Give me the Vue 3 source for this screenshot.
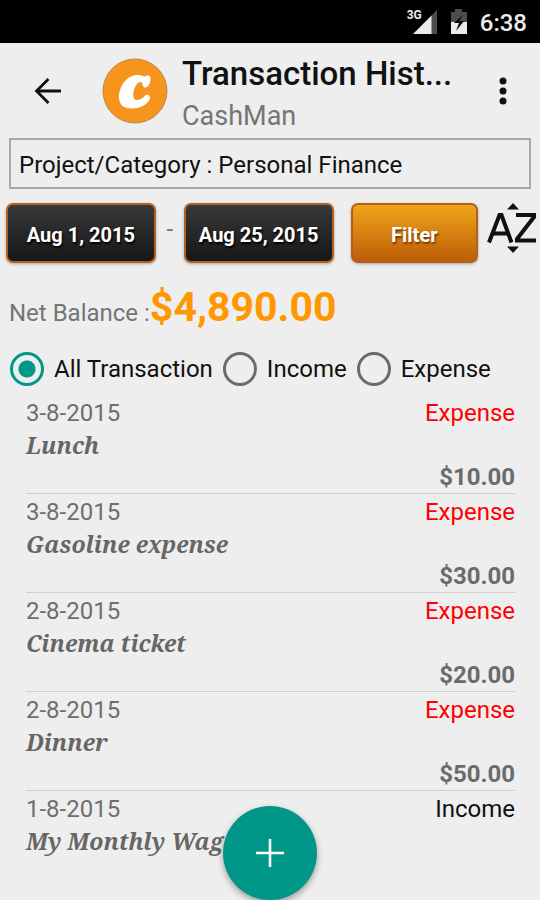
<script setup>
import { ref, computed } from 'vue'

const filter = ref('All Transaction')
const filters = ['All Transaction', 'Income', 'Expense']

const transactions = [
  { date: '3-8-2015', name: 'Lunch', type: 'Expense', amount: '$10.00' },
  { date: '3-8-2015', name: 'Gasoline expense', type: 'Expense', amount: '$30.00' },
  { date: '2-8-2015', name: 'Cinema ticket', type: 'Expense', amount: '$20.00' },
  { date: '2-8-2015', name: 'Dinner', type: 'Expense', amount: '$50.00' },
  { date: '1-8-2015', name: 'My Monthly Wage', type: 'Income', amount: '' },
]

const visible = computed(() =>
  filter.value === 'All Transaction'
    ? transactions
    : transactions.filter((t) => t.type === filter.value),
)
</script>

<template>
  <div class="screen">
    <div class="status">
      <span class="network">3G</span>
      <svg class="signal" width="24" height="24" viewBox="0 0 24 24" aria-hidden="true">
        <path d="M24 0V24H18V6Z" fill="#4c4c4c" />
        <path d="M18.500 5.500V24H0Z" fill="#ececec" />
      </svg>
      <svg class="battery" width="18" height="26" viewBox="0 0 18 26" aria-hidden="true">
        <path d="M5 0H12V3H17V13H1V3H5Z" fill="#4c4c4c" />
        <path d="M1 13H17V25H1Z" fill="#ececec" />
        <path d="M13 6L4 14H9L6 22L14 12H9Z" fill="#000" />
      </svg>
      <span class="clock">6:38</span>
    </div>

    <header class="appbar">
      <button class="icon-btn" aria-label="Back">
        <svg width="28" height="28" viewBox="0 0 28 28" fill="none" stroke="#111" stroke-width="2.800" aria-hidden="true">
          <path d="M27 14H3M14.500 2L2.500 14L14.500 26" />
        </svg>
      </button>
      <svg class="logo" width="66" height="66" viewBox="0 0 66 66" aria-hidden="true">
        <circle cx="33" cy="33" r="32" fill="#f7941d" stroke="#b98a4c" stroke-width="1" />
        <path
          d="M46 17.500C44 17 43 18.500 42 18.500C39 17 34 16.500 30 18C22 21 16.500 31 17 40C17.500 47 22 50.500 29 50.500C38 50.500 44 47 47.500 42C49.500 38.500 46 35 43 37.500C40 41 37.500 42 35 42C31 42 30.500 37 32 32C33.500 27 36 23.500 39 24C41 24.500 40 29 43 29.500C47 29.800 48.500 24 48.500 20C48.500 18.500 47.500 17.500 46 17.500Z"
          fill="#fff"
        />
      </svg>
      <div class="titles">
        <h1>Transaction Hist...</h1>
        <p>CashMan</p>
      </div>
      <button class="icon-btn" aria-label="More">
        <svg width="8" height="28" viewBox="0 0 8 28" fill="#111" aria-hidden="true">
          <circle cx="4" cy="4" r="3.500" />
          <circle cx="4" cy="14" r="3.500" />
          <circle cx="4" cy="24" r="3.500" />
        </svg>
      </button>
    </header>

    <main>
      <button class="project">Project/Category : Personal Finance</button>

      <div class="range">
        <button class="date">Aug 1, 2015</button>
        <span class="dash">-</span>
        <button class="date">Aug 25, 2015</button>
        <button class="apply">Filter</button>
        <button class="icon-btn sort" aria-label="Sort">
          <svg width="50" height="50" viewBox="0 0 50 50" aria-hidden="true">
            <path d="M20 6.500L26 0L32 6.500ZM20 43.500L26 50L32 43.500Z" fill="#111" />
            <g fill="none" stroke="#111" stroke-width="4">
              <path d="M2 39.500L12.500 12H14.500L24.500 39.500M6 30.500H21" />
              <path d="M29 12H47V14L30 36V37.500H49" />
            </g>
          </svg>
        </button>
      </div>

      <p class="balance">Net Balance :<strong>$4,890.00</strong></p>

      <div class="radios" role="radiogroup">
        <label v-for="f in filters" :key="f">
          <input v-model="filter" type="radio" name="type" :value="f" />
          {{ f }}
        </label>
      </div>

      <ul class="list">
        <li v-for="(t, i) in visible" :key="i">
          <div class="line">
            <span>{{ t.date }}</span>
            <span :class="t.type.toLowerCase()">{{ t.type }}</span>
          </div>
          <div class="name">{{ t.name }}</div>
          <div v-if="t.amount" class="amount">{{ t.amount }}</div>
        </li>
      </ul>
    </main>

    <button class="fab" aria-label="Add">
      <svg width="28" height="28" viewBox="0 0 28 28" stroke="#fff" stroke-width="2.600" aria-hidden="true">
        <path d="M14 0V28M0 14H28" />
      </svg>
    </button>
  </div>
</template>

<style>
body {
  background: #eeeeee;
}
</style>

<style scoped>
.screen {
  min-height: 100vh;
  box-sizing: border-box;
  background: #eeeeee;
  color: #111;
  font-family: Roboto, sans-serif;
  font-size: 24px;
  line-height: 32px;
}
h1,
p,
ul {
  margin: 0;
  padding: 0;
}
button {
  font-family: inherit;
  cursor: pointer;
}
.icon-btn {
  display: flex;
  padding: 0;
  border: 0;
  background: none;
}
.status {
  display: flex;
  align-items: center;
  justify-content: flex-end;
  height: 43px;
  padding-right: 13px;
  background: #000;
  color: #ececec;
}
.network {
  align-self: flex-start;
  margin: 7px -9px 0 0;
  font-size: 12px;
  font-weight: 700;
  line-height: 16px;
}
.battery {
  margin: 0 12px 0 13px;
}
.clock {
  padding-top: 2px;
  font-weight: 500;
}
.appbar {
  display: flex;
  align-items: center;
  height: 95px;
  padding: 0 33px 0 34px;
}
.logo {
  flex: none;
  margin: 0 14px 0 40px;
}
.titles {
  flex: 1;
  min-width: 0;
  padding-top: 6px;
}
h1 {
  overflow: hidden;
  font-size: 33px;
  font-weight: 500;
  line-height: 44px;
  white-space: nowrap;
}
.titles p {
  color: #757575;
  font-size: 27px;
  line-height: 40px;
}
.project {
  display: block;
  width: calc(100% - 18px);
  height: 51px;
  margin: 0 9px;
  padding: 2px 8px 0;
  border: 2px solid #a9a9a9;
  background: #eeeeee;
  color: #111;
  font-size: 24px;
  text-align: left;
}
.range {
  display: flex;
  align-items: center;
  margin-top: 14px;
  padding: 0 3px 0 6px;
}
.date,
.apply {
  height: 60px;
  padding: 4px 0 0;
  border: 2px solid #b5601a;
  border-radius: 7px;
  color: #fff;
  font-size: 20px;
  font-weight: 700;
  box-shadow: 0 1px 3px rgba(0, 0, 0, 0.3);
  text-shadow: 1px 2px 2px #000;
}
.date {
  flex: 150;
  background: linear-gradient(#383838, #171717);
}
.apply {
  flex: 127;
  margin: 0 9px 0 17px;
  background: linear-gradient(#f0a51a, #bd5e08);
  text-shadow: 1px 2px 2px #6b3500;
}
.dash {
  width: 28px;
  padding-bottom: 8px;
  color: #757575;
  text-align: center;
}
.sort {
  padding-bottom: 10px;
}
.balance {
  display: flex;
  align-items: baseline;
  margin-top: 20px;
  padding-left: 9px;
  color: #757575;
  line-height: 48px;
}
.balance strong {
  color: #ff9800;
  font-size: 41px;
}
.radios {
  display: flex;
  gap: 10px;
  margin-top: 15px;
  padding-left: 10px;
}
.radios label {
  display: flex;
  align-items: center;
  gap: 10px;
}
.radios input {
  width: 34px;
  height: 34px;
  margin: 0;
  border: 3px solid #6b6b6b;
  border-radius: 50%;
  appearance: none;
}
.radios input:checked {
  border-color: #009688;
  background: radial-gradient(circle, #009688 8px, transparent 9px);
}
.list {
  margin: 9px 25px 0 26px;
  list-style: none;
}
li {
  height: 96px;
  padding-top: 2px;
  border-bottom: 1px solid #cfcfcf;
}
li:last-child {
  border-bottom: 0;
}
.line {
  display: flex;
  justify-content: space-between;
  color: #6e6e6e;
}
.expense {
  color: #ff0000;
}
.income {
  color: #111;
}
.name {
  color: #666;
  font-family: "Noto Serif", "Droid Serif", "DejaVu Serif Condensed", "DejaVu Serif", serif;
  font-size: 23px;
  font-style: italic;
  font-weight: 700;
}
.amount {
  color: #6b6b6b;
  font-weight: 700;
  text-align: right;
}
.fab {
  position: fixed;
  bottom: 0;
  left: 50%;
  display: flex;
  align-items: center;
  justify-content: center;
  width: 94px;
  height: 94px;
  padding: 0;
  border: 0;
  border-radius: 50%;
  background: #009688;
  box-shadow: 0 3px 6px rgba(0, 0, 0, 0.35);
  transform: translateX(-50%);
}
</style>
